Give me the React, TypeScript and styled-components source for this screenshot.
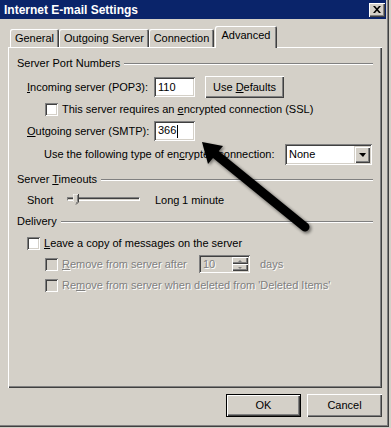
import React from 'react';
import styled, { createGlobalStyle } from 'styled-components';

const Global = createGlobalStyle`
  html, body { margin: 0; padding: 0; background: #d4d0c8; overflow: hidden; }
  body { font-family: "Liberation Sans", Arial, sans-serif; font-size: 11px; color: #000; }
  * { box-sizing: border-box; }
`;

const raised = 'inset 1px 1px #fff, inset -1px -1px #404040, inset -2px -2px #808080';
const sunken = 'inset 1px 1px #808080, inset -1px -1px #fff, inset 2px 2px #404040, inset -2px -2px #d4d0c8';

const Window = styled.div`
  position: relative;
  width: 389px;
  height: 427px;
  background: #d4d0c8;
  box-shadow: inset -1px -1px #404040, inset -2px -2px #808080;
  display: flex;
  flex-direction: column;
`;

const TitleBar = styled.div`
  height: 19px;
  margin-right: 3px;
  background: #0a246a;
  color: #fff;
  display: flex;
  align-items: center;
  justify-content: space-between;
  padding: 0 1px 0 4px;
  font-weight: bold;
  font-size: 12px;
  white-space: nowrap;
`;

const CloseButton = styled.div`
  width: 16px;
  height: 14px;
  background: #d4d0c8;
  box-shadow: ${raised};
  display: flex;
  align-items: center;
  justify-content: center;
  padding-bottom: 1px;
`;

const TabStrip = styled.div`
  display: flex;
  align-items: flex-end;
  height: 21px;
  margin-top: 7px;
  padding-left: 10px;
  position: relative;
  z-index: 1;
`;

const Tab = styled.div<{ $w: number; $active?: boolean }>`
  width: ${p => p.$w}px;
  height: ${p => (p.$active ? 22 : 18)}px;
  margin-bottom: ${p => (p.$active ? -1 : 0)}px;
  margin-left: ${p => (p.$active ? 1 : 0)}px;
  background: #d4d0c8;
  border-radius: 2px 2px 0 0;
  box-shadow: inset 1px 1px #fff, inset -1px 0 #404040, inset -2px 0 #808080;
  display: flex;
  align-items: center;
  justify-content: center;
  padding-bottom: ${p => (p.$active ? 4 : 0)}px;
  white-space: nowrap;
`;

const Panel = styled.div`
  margin-left: 8px;
  width: 374px;
  height: 341px;
  box-shadow: ${raised};
  padding: 1px 9px 0 9px;
  display: flex;
  flex-direction: column;
`;

const Header = styled.div<{ $mt: number }>`
  display: flex;
  align-items: center;
  height: 13px;
  margin-top: ${p => p.$mt}px;
  white-space: nowrap;
`;

const HeaderText = styled.span`
  line-height: 13px;
`;

const Rule = styled.div`
  flex: 1;
  height: 2px;
  margin-left: 4px;
  margin-top: 1px;
  border-top: 1px solid #808080;
  border-bottom: 1px solid #fff;
`;

const Row = styled.div<{ $mt: number; $h: number; $indent: number }>`
  display: flex;
  align-items: center;
  height: ${p => p.$h}px;
  margin-top: ${p => p.$mt}px;
  padding-left: ${p => p.$indent}px;
  white-space: nowrap;
`;

const Label = styled.span<{ $w?: number; $disabled?: boolean; $gap?: number }>`
  display: inline-block;
  ${p => (p.$w ? `width: ${p.$w}px;` : '')}
  margin-left: ${p => p.$gap ?? 0}px;
  color: ${p => (p.$disabled ? '#808080' : '#000')};
  text-shadow: ${p => (p.$disabled ? '1px 1px 0 #fff' : 'none')};
  line-height: 13px;
`;

const U = styled.span`
  text-decoration: underline;
  text-underline-offset: 1px;
`;

const Check = styled.span<{ $disabled?: boolean }>`
  display: inline-block;
  flex: none;
  width: 13px;
  height: 13px;
  background: ${p => (p.$disabled ? '#d4d0c8' : '#fff')};
  box-shadow: ${sunken};
  margin-right: 4px;
`;

const Field = styled.div<{ $w: number; $h: number; $disabled?: boolean }>`
  width: ${p => p.$w}px;
  height: ${p => p.$h}px;
  flex: none;
  background: ${p => (p.$disabled ? '#d4d0c8' : '#fff')};
  box-shadow: ${sunken};
  display: flex;
  align-items: center;
  padding: 2px 2px 2px 4px;
  color: ${p => (p.$disabled ? '#808080' : '#000')};
  text-shadow: ${p => (p.$disabled ? '1px 1px 0 #fff' : 'none')};
`;

const FieldText = styled.span`
  flex: 1;
  line-height: 13px;
`;

const Caret = styled.span`
  display: inline-block;
  width: 1px;
  height: 13px;
  background: #000;
  vertical-align: middle;
  margin-left: 1px;
`;

const Button = styled.div<{ $w: number; $h: number; $default?: boolean; $gap?: number }>`
  width: ${p => p.$w}px;
  height: ${p => p.$h}px;
  margin-left: ${p => p.$gap ?? 0}px;
  flex: none;
  background: #d4d0c8;
  box-shadow: ${p =>
    p.$default
      ? 'inset 0 0 0 1px #000, inset 2px 2px #fff, inset -2px -2px #404040, inset -3px -3px #808080'
      : raised};
  display: flex;
  align-items: center;
  justify-content: center;
  line-height: 13px;
`;

const DropButton = styled.div`
  width: 16px;
  height: 17px;
  flex: none;
  background: #d4d0c8;
  box-shadow: inset 1px 1px #d4d0c8, inset 2px 2px #fff, inset -1px -1px #404040, inset -2px -2px #808080;
  display: flex;
  align-items: center;
  justify-content: center;
`;

const DownTri = styled.span`
  width: 0;
  height: 0;
  border-left: 4px solid transparent;
  border-right: 3px solid transparent;
  border-top: 4px solid #000;
  margin-top: 1px;
`;

const Spin = styled.div`
  width: 16px;
  height: 14px;
  flex: none;
  display: flex;
  flex-direction: column;
`;

const SpinHalf = styled.div`
  flex: 1;
  background: #d4d0c8;
  box-shadow: inset 1px 1px #fff, inset -1px -1px #404040, inset -2px -2px #808080;
  display: flex;
  align-items: center;
  justify-content: center;
`;

const Tri = styled.span<{ $up?: boolean }>`
  width: 0;
  height: 0;
  border-left: 2px solid transparent;
  border-right: 2px solid transparent;
  ${p => (p.$up ? 'border-bottom: 2px solid #808080;' : 'border-top: 2px solid #808080;')}
`;

const Slider = styled.div`
  position: relative;
  width: 73px;
  height: 16px;
  flex: none;
  display: flex;
  align-items: center;
`;

const Track = styled.div`
  width: 100%;
  height: 4px;
  margin-top: -2px;
  border-top: 1px solid #808080;
  border-left: 1px solid #808080;
  border-bottom: 1px solid #fff;
  border-right: 1px solid #fff;
  background: #404040;
  box-shadow: inset 0 -1px #d4d0c8;
`;

const Thumb = styled.svg`
  position: absolute;
  left: 6px;
  top: 2px;
`;

const Footer = styled.div`
  display: flex;
  justify-content: flex-end;
  margin-top: 6px;
  padding-right: 7px;
`;

const Overlay = styled.svg`
  position: absolute;
  left: 0;
  top: 0;
  pointer-events: none;
`;

export default function App() {
  return (
    <>
      <Global />
      <Window>
        <TitleBar>
          <span>Internet E-mail Settings</span>
          <CloseButton>
            <svg width="8" height="7" viewBox="0 0 8 7">
              <path d="M0 0h2l2 2.2L6 0h2L5 3.5 8 7H6L4 4.8 2 7H0l3-3.5z" fill="#000" />
            </svg>
          </CloseButton>
        </TitleBar>

        <TabStrip>
          <Tab $w={49}>General</Tab>
          <Tab $w={90}>Outgoing Server</Tab>
          <Tab $w={65}>Connection</Tab>
          <Tab $w={62} $active>Advanced</Tab>
        </TabStrip>

        <Panel>
          <Header $mt={9}>
            <HeaderText>Server Port Numbers</HeaderText>
            <Rule />
          </Header>
          <Row $mt={6} $h={22} $indent={10}>
            <Label $w={127}>
              <U>I</U>ncoming server (POP3):
            </Label>
            <Field $w={41} $h={20}>
              <FieldText>110</FieldText>
            </Field>
            <Button $w={79} $h={22} $gap={10}>
              Use&nbsp;<U>D</U>efaults
            </Button>
          </Row>
          <Row $mt={5} $h={13} $indent={28}>
            <Check />
            <Label>
              This server requires an <U>e</U>ncrypted connection (SSL)
            </Label>
          </Row>
          <Row $mt={5} $h={20} $indent={10}>
            <Label $w={127}>
              <U>O</U>utgoing server (SMTP):
            </Label>
            <Field $w={41} $h={20}>
              <FieldText>
                366
                <Caret />
              </FieldText>
            </Field>
          </Row>
          <Row $mt={3} $h={21} $indent={27}>
            <Label $w={241}>
              Use the following type of en<U>c</U>rypted connection:
            </Label>
            <Field $w={87} $h={21}>
              <FieldText>None</FieldText>
              <DropButton>
                <DownTri />
              </DropButton>
            </Field>
          </Row>

          <Header $mt={8}>
            <HeaderText>
              Server <U>T</U>imeouts
            </HeaderText>
            <Rule />
          </Header>
          <Row $mt={6} $h={16} $indent={10}>
            <Label $w={40}>Short</Label>
            <Slider>
              <Track />
              <Thumb width="6" height="11" viewBox="0 0 6 11">
                <path d="M0 0H6V8L3 11L0 8Z" fill="#d4d0c8" />
                <path d="M0 8V0H5" stroke="#fff" strokeWidth="1" fill="none" />
                <path d="M5.5 0V8L3 10.5" stroke="#404040" strokeWidth="1" fill="none" />
                <path d="M4.5 1V7.6L3 9.2" stroke="#808080" strokeWidth="1" fill="none" />
              </Thumb>
            </Slider>
            <Label $w={27} $gap={15}>Long</Label>
            <Label>1 minute</Label>
          </Row>

          <Header $mt={7}>
            <HeaderText>Delivery</HeaderText>
            <Rule />
          </Header>
          <Row $mt={9} $h={13} $indent={10}>
            <Check />
            <Label>
              <U>L</U>eave a copy of messages on the server
            </Label>
          </Row>
          <Row $mt={5} $h={18} $indent={28}>
            <Check $disabled />
            <Label $w={137} $disabled>
              <U>R</U>emove from server after
            </Label>
            <Field $w={51} $h={18} $disabled>
              <FieldText>10</FieldText>
              <Spin>
                <SpinHalf>
                  <Tri $up />
                </SpinHalf>
                <SpinHalf>
                  <Tri />
                </SpinHalf>
              </Spin>
            </Field>
            <Label $disabled $gap={10}>days</Label>
          </Row>
          <Row $mt={6} $h={13} $indent={28}>
            <Check $disabled />
            <Label $disabled>
              Re<U>m</U>ove from server when deleted from 'Deleted Items'
            </Label>
          </Row>
        </Panel>

        <Footer>
          <Button $w={75} $h={23} $default>
            OK
          </Button>
          <Button $w={75} $h={23} $gap={6}>
            Cancel
          </Button>
        </Footer>

        <Overlay width="391" height="428" viewBox="0 0 391 428">
          <defs>
            <filter id="shadow" x="-20%" y="-20%" width="140%" height="140%">
              <feGaussianBlur stdDeviation="1.6" />
            </filter>
            <filter id="soft" x="-20%" y="-20%" width="140%" height="140%">
              <feGaussianBlur stdDeviation="0.6" />
            </filter>
          </defs>
          <g filter="url(#shadow)" opacity="0.45" transform="translate(1.5 1.5)">
            <line x1="305" y1="227" x2="214" y2="153" stroke="#000" strokeWidth="10" strokeLinecap="round" />
            <polygon points="202,142 223,146 208,164" fill="#000" />
          </g>
          <g filter="url(#soft)">
            <line x1="305" y1="227" x2="214" y2="153" stroke="#000" strokeWidth="9" strokeLinecap="round" />
            <polygon points="202,142 223,146 208,164" fill="#000" />
          </g>
        </Overlay>
      </Window>
    </>
  );
}
